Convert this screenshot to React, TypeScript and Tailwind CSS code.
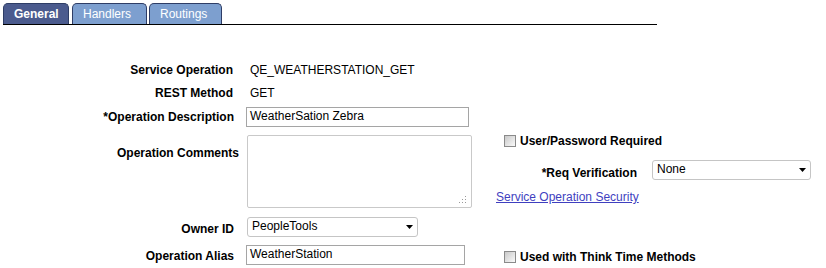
import React from 'react';

function Tab({ label, active, w }: { label: string; active?: boolean; w: string }) {
  return (
    <div
      className={`${w} h-[21px] pl-[10px] flex items-center rounded-t-[5px] border border-b-0 border-[#2e3d66] text-white leading-none ${
        active ? 'bg-[#4b5b8e] font-bold' : 'bg-[#7d9fcf]'
      }`}
    >
      {label}
    </div>
  );
}

function Checkbox() {
  return (
    <div className="w-[12px] h-[12px] shrink-0 border border-[#8a8a8a] bg-gradient-to-br from-[#c9c9c9] to-[#fafafa]" />
  );
}

function SelectBox({ value, w }: { value: string; w: string }) {
  return (
    <div className={`${w} h-[20px] border border-[#c5c5c5] rounded-[3px] bg-white flex items-center pl-[4px] pr-[4px]`}>
      <span className="flex-1 leading-none -mt-[2px]">{value}</span>
      <svg width="7" height="4" viewBox="0 0 7 4">
        <path d="M0 0h7L3.5 4z" fill="#000" />
      </svg>
    </div>
  );
}

export default function App() {
  return (
    <div className="w-[826px] h-[268px] overflow-hidden bg-white text-black text-[12px] font-['Liberation_Sans',Arial,sans-serif]">
      {/* Tabs */}
      <div className="pt-[3px] pl-[3px]">
        <div className="w-[654px] h-[22px] flex border-b border-black">
          <Tab label="General" active w="w-[66px]" />
          <div className="w-[3px]" />
          <Tab label="Handlers" w="w-[75px]" />
          <div className="w-[2px]" />
          <Tab label="Routings" w="w-[73px]" />
        </div>
      </div>

      {/* Service Operation */}
      <div className="mt-[35px] h-[20px] flex items-center">
        <div className="w-[233px] text-right font-bold">Service Operation</div>
        <div className="ml-[17px]">QE_WEATHERSTATION_GET</div>
      </div>

      {/* REST Method */}
      <div className="mt-[3px] h-[20px] flex items-center">
        <div className="w-[233px] text-right font-bold">REST Method</div>
        <div className="ml-[17px]">GET</div>
      </div>

      {/* Operation Description */}
      <div className="mt-[4px] h-[20px] flex items-center">
        <div className="w-[234px] text-right font-bold">*Operation Description</div>
        <div className="ml-[12px] w-[223px] h-[20px] border border-[#a5a5a5] pl-[3px] flex items-center">
          <span className="-mt-[2px]">WeatherSation Zebra</span>
        </div>
      </div>

      {/* Operation Comments + right column */}
      <div className="mt-[8px] flex items-start">
        <div className="w-[239px] text-right font-bold pt-[11px] leading-[14px]">Operation Comments</div>
        <div className="ml-[8px] w-[225px] h-[73px] border border-[#c9c9c9] rounded-[2px] relative">
          <svg className="absolute right-[4px] bottom-[3px]" width="8" height="8" viewBox="0 0 8 8">
            <rect x="6" y="0" width="1" height="1" fill="#9a9a9a" />
            <rect x="3" y="3" width="1" height="1" fill="#9a9a9a" />
            <rect x="6" y="3" width="1" height="1" fill="#9a9a9a" />
            <rect x="0" y="6" width="1" height="1" fill="#9a9a9a" />
            <rect x="3" y="6" width="1" height="1" fill="#9a9a9a" />
            <rect x="6" y="6" width="1" height="1" fill="#9a9a9a" />
          </svg>
        </div>
        <div className="ml-[24px] -mt-[1px] flex flex-col">
          <div className="h-[14px] pl-[8px] flex items-center gap-[4px]">
            <Checkbox />
            <span className="font-bold">User/Password Required</span>
          </div>
          <div className="mt-[12px] h-[20px] flex items-center">
            <div className="w-[141px] text-right font-bold mt-[5px]">*Req Verification</div>
            <div className="ml-[15px]">
              <SelectBox value="None" w="w-[159px]" />
            </div>
          </div>
          <a href="#" className="mt-[10px] leading-[14px] text-[#3f3fbf] underline">
            Service Operation Security
          </a>
        </div>
      </div>

      {/* Owner ID */}
      <div className="mt-[9px] h-[20px] flex items-center">
        <div className="w-[234px] text-right font-bold mt-[4px]">Owner ID</div>
        <div className="ml-[13px]">
          <SelectBox value="PeopleTools" w="w-[171px]" />
        </div>
      </div>

      {/* Operation Alias */}
      <div className="mt-[8px] h-[20px] flex items-center">
        <div className="w-[234px] text-right font-bold mt-[2px]">Operation Alias</div>
        <div className="ml-[12px] w-[219px] h-[20px] border border-[#a5a5a5] pl-[3px] flex items-center">
          <span className="-mt-[2px]">WeatherStation</span>
        </div>
        <div className="ml-[39px] mt-[4px] flex items-center gap-[4px]">
          <Checkbox />
          <span className="font-bold">Used with Think Time Methods</span>
        </div>
      </div>
    </div>
  );
}
